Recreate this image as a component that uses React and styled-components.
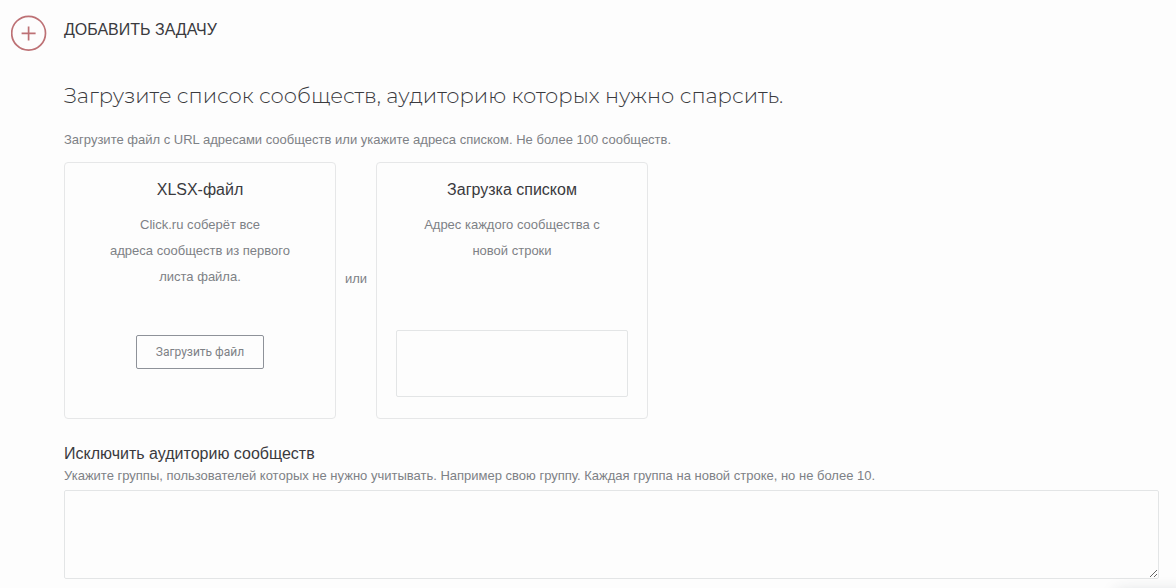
import React, { useState } from "react";
import styled, { createGlobalStyle } from "styled-components";

const GlobalStyle = createGlobalStyle`
  *,
  *::before,
  *::after {
    box-sizing: border-box;
  }

  body {
    margin: 0;
    background: #fdfdfd;
    color: #3a3a3e;
    font-family: "Liberation Sans", Arial, sans-serif;
    font-size: 13px;
  }
`;

const Page = styled.main`
  display: grid;
  grid-template-columns: 36px minmax(0, 1fr);
  column-gap: 17px;
  padding: 15px 17px 9px 11px;
`;

const AddButton = styled.button`
  width: 36px;
  height: 36px;
  padding: 0;
  border: 0;
  background: none;
  cursor: pointer;

  svg {
    display: block;
  }
`;

const Content = styled.div`
  min-width: 0;
`;

const PageTitle = styled.h1`
  margin: 0;
  font-size: 16px;
  font-weight: 400;
  line-height: 30px;
  text-transform: uppercase;
`;

const Heading = styled.h2`
  margin: 35px 0 0;
  font-family: Montserrat, Inter, sans-serif;
  font-size: 21px;
  font-weight: 300;
  line-height: 32px;
`;

const Hint = styled.p`
  margin: 0;
  color: #7d8186;
  font-size: 13px;
  line-height: 20px;
`;

const IntroHint = styled(Hint)`
  margin: 18px 0 12px;
`;

const Sources = styled.div`
  display: flex;
  align-items: stretch;
`;

const Card = styled.section`
  display: flex;
  flex-direction: column;
  align-items: center;
  justify-content: space-between;
  flex: 0 1 272px;
  min-height: 257px;
  padding: 13px 19px 21px;
  border: 1px solid #e6e7e8;
  border-radius: 4px;
  text-align: center;
`;

const CardTitle = styled.h3`
  display: block;
  margin: 0 0 8px;
  font-size: 16px;
  font-weight: 400;
  line-height: 28px;
`;

const CardText = styled.p`
  max-width: 190px;
  margin: 0;
  color: #7d8186;
  font-size: 13px;
  line-height: 26px;
`;

const Divider = styled.span`
  flex: 0 0 40px;
  align-self: center;
  padding-bottom: 24px;
  color: #7d8186;
  line-height: 20px;
  text-align: center;
`;

const UploadButton = styled.button`
  height: 34px;
  margin-bottom: 28px;
  padding: 0 19px;
  border: 1px solid #8e9299;
  border-radius: 2px;
  background: transparent;
  color: #7d8186;
  font-family: Roboto, "Liberation Sans", sans-serif;
  font-size: 12px;
  cursor: pointer;
`;

const TextArea = styled.textarea`
  display: block;
  width: 100%;
  height: ${({ $height }) => $height}px;
  padding: 8px;
  border: 1px solid #e3e5e6;
  border-radius: 2px;
  background: transparent;
  color: inherit;
  font: inherit;
  resize: ${({ $resize }) => $resize || "none"};
`;

const ExcludeLabel = styled.label`
  display: block;
  margin-top: 24px;
  font-size: 16px;
  line-height: 22px;
`;

const ExcludeHint = styled(Hint)`
  margin: 1px 0 4px;
`;

// top edge of the collapsed widget, only its shadow shows
const WidgetShadow = styled.div`
  position: fixed;
  right: -20px;
  bottom: -20px;
  width: 80px;
  height: 16px;
  box-shadow: 0 0 16px rgba(40, 50, 60, 0.18);
`;

const PlusIcon = () => (
  <svg width="36" height="36" viewBox="0 0 36 36" fill="none" stroke="#bd7175">
    <circle cx="17.6" cy="18.2" r="16.9" strokeWidth="1.7" />
    <path d="M10.6 18.4h14M17.6 11.4v14" strokeWidth="1.7" />
  </svg>
);

const App = () => {
  const [list, setList] = useState("");
  const [excluded, setExcluded] = useState("");

  return (
    <>
      <GlobalStyle />
      <Page>
        <AddButton type="button" aria-labelledby="page-title">
          <PlusIcon />
        </AddButton>
        <Content>
          <PageTitle id="page-title">Добавить задачу</PageTitle>
          <Heading>
            Загрузите список сообществ, аудиторию которых нужно спарсить.
          </Heading>
          <IntroHint>
            Загрузите файл с URL адресами сообществ или укажите адреса списком.
            Не более 100 сообществ.
          </IntroHint>
          <Sources>
            <Card>
              <div>
                <CardTitle>XLSX-файл</CardTitle>
                <CardText>
                  Click.ru соберёт все
                  <br />
                  адреса сообществ из первого листа файла.
                </CardText>
              </div>
              <UploadButton type="button">Загрузить файл</UploadButton>
            </Card>
            <Divider>или</Divider>
            <Card>
              <div>
                <CardTitle as="label" htmlFor="list">
                  Загрузка списком
                </CardTitle>
                <CardText>Адрес каждого сообщества с новой строки</CardText>
              </div>
              <TextArea
                id="list"
                $height={67}
                value={list}
                onChange={(e) => setList(e.target.value)}
              />
            </Card>
          </Sources>
          <ExcludeLabel htmlFor="excluded">
            Исключить аудиторию сообществ
          </ExcludeLabel>
          <ExcludeHint id="excluded-hint">
            Укажите группы, пользователей которых не нужно учитывать. Например
            свою группу. Каждая группа на новой строке, но не более 10.
          </ExcludeHint>
          <TextArea
            id="excluded"
            aria-describedby="excluded-hint"
            $height={89}
            $resize="vertical"
            value={excluded}
            onChange={(e) => setExcluded(e.target.value)}
          />
        </Content>
      </Page>
      <WidgetShadow />
    </>
  );
};

export default App;
